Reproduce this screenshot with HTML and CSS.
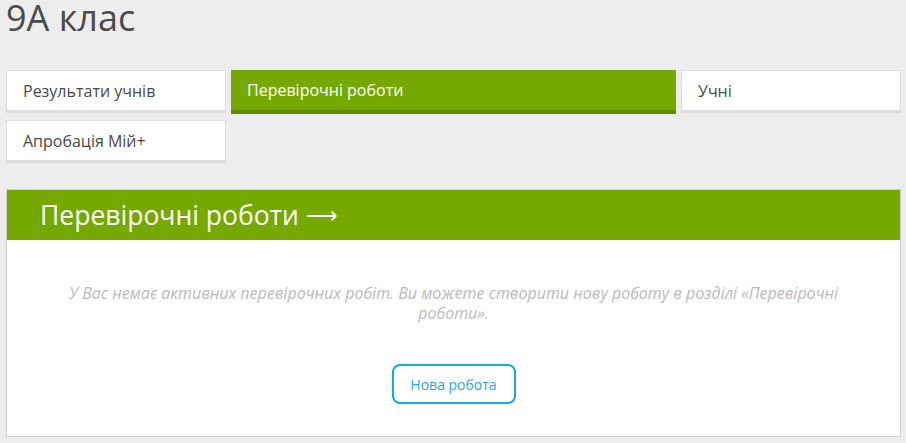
FILE: index.html
```html
<!DOCTYPE html>
<html lang="uk">
<head>
    <meta charset="UTF-8">
    <meta name="viewport" content="width=device-width, initial-scale=1.0">
    <title>9A клас</title>
    <link rel="stylesheet" href="styles.css">
</head>
<body>
    <div class="page">
        <h1 class="title">9A клас</h1>

        <div class="tabs">
            <a class="tab" href="#">Результати учнів</a>
            <a class="tab tab-active" href="#">Перевірочні роботи</a>
            <a class="tab" href="#">Учні</a>
            <a class="tab" href="#">Апробація Мій+</a>
        </div>

        <div class="panel">
            <div class="panel-header">Перевірочні роботи <span class="arrow">&#10230;</span></div>
            <div class="panel-body">
                <p class="empty">У Вас немає активних перевірочних робіт. Ви можете створити нову роботу в розділі «Перевірочні роботи».</p>
                <button class="btn-new">Нова робота</button>
            </div>
        </div>
    </div>
</body>
</html>
```

FILE: styles.css
```css
body {
    margin: 0;
    background-color: #ededed;
    font-family: "Open Sans", Arial, sans-serif;
    color: #4a4a4a;
}
.page {
    width: 895px;
    padding-left: 6px;
    padding-top: 4px;
}
.title {
    margin: -4px 0 34px;
    font-size: 36px;
    line-height: 36px;
    font-weight: normal;
    color: #4a4a4a;
}
.tabs {
    display: grid;
    grid-template-columns: repeat(4, 1fr);
    column-gap: 5px;
    row-gap: 6px;
    align-items: start;
}
.tab {
    box-sizing: border-box;
    height: 43px;
    padding: 0 16px;
    display: flex;
    align-items: center;
    background: #ffffff;
    border: 1px solid #dcdcdc;
    border-bottom-width: 3px;
    font-size: 16px;
    color: #4a4a4a;
    text-decoration: none;
}
.tab-active {
    grid-column: span 2;
    height: 44px;
    background: #76a900;
    border: none;
    border-bottom: 4px solid #5f8b00;
    color: #ffffff;
}
.panel {
    margin-top: 26px;
    background: #ffffff;
    border: 1px solid #cfcfcf;
}
.panel-header {
    height: 50px;
    padding-left: 33px;
    display: flex;
    align-items: center;
    background: #76a900;
    color: #ffffff;
    font-size: 26.5px;
}
.arrow {
    margin-left: 7px;
    font-family: "DejaVu Sans", sans-serif;
    font-size: 22px;
    font-weight: 200;
}
.panel-body {
    padding: 43px 60px 32px;
    text-align: center;
}
.empty {
    margin: 0 0 41px;
    font-size: 16px;
    line-height: 20px;
    font-style: italic;
    color: #b9b9b9;
}
.btn-new {
    width: 124px;
    height: 40px;
    background: #ffffff;
    border: 2px solid #13a8e4;
    border-radius: 8px;
    font-family: "Open Sans", Arial, sans-serif;
    font-size: 14px;
    color: #2aa6e0;
    cursor: pointer;
}
```
